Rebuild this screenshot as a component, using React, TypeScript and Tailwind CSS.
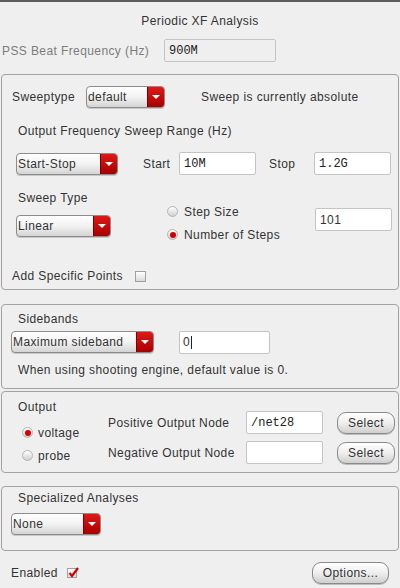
import React from "react";

const font = "font-['Liberation_Sans',Arial,sans-serif] text-[12px] tracking-[0.4px] text-[#333]";
const mono = "font-['Liberation_Mono','Courier_New',monospace] text-[12px] tracking-normal text-[#222]";

function Dropdown({ label, w }: { label: string; w: string }) {
  return (
    <div
      className={`flex h-[22px] ${w} shrink-0 overflow-hidden rounded-[4px] border border-[#8c8c8c] bg-gradient-to-b from-white via-[#f2f2f2] to-[#d4d4d4] shadow-[0_1px_0_#c8c8c8]`}
    >
      <span className="flex flex-1 items-center pl-[1px] leading-none">{label}</span>
      <span className="flex w-[17px] items-center justify-center border-l border-[#7a0000] bg-gradient-to-b from-[#e01818] to-[#a80000]">
        <span className="h-0 w-0 border-x-[4px] border-t-[4px] border-x-transparent border-t-white" />
      </span>
    </div>
  );
}

function Field({ value, w, mono: isMono, disabled }: { value: string; w: string; mono?: boolean; disabled?: boolean }) {
  return (
    <div
      className={`flex h-[23px] ${w} shrink-0 items-center rounded-[2px] border border-[#c4c4c4] pl-[4px] ${
        disabled ? "bg-[#efefef]" : "bg-white"
      } ${isMono ? mono : ""}`}
    >
      {value}
    </div>
  );
}

function Radio({ on }: { on?: boolean }) {
  return (
    <span className="flex h-[11px] w-[11px] shrink-0 items-center justify-center rounded-full border border-[#b4b4b4] bg-gradient-to-b from-white to-[#d0d0d0]">
      {on && <span className="h-[6px] w-[6px] rounded-full bg-[#d40000]" />}
    </span>
  );
}

function Button({ label, w }: { label: string; w: string }) {
  return (
    <div
      className={`flex h-[22px] ${w} shrink-0 items-center justify-center rounded-[9px] border border-[#8a8a8a] bg-gradient-to-b from-white via-[#eeeeee] to-[#cfcfcf] shadow-[0_1px_0_#bdbdbd]`}
    >
      {label}
    </div>
  );
}

function Box({ children, className }: { children: React.ReactNode; className: string }) {
  return (
    <div className={`ml-[1px] w-[398px] rounded-[4px] border border-[#a2a2a2] pl-[2px] ${className}`}>{children}</div>
  );
}

export default function App() {
  return (
    <div className={`h-[588px] w-[400px] overflow-hidden border-t-2 border-[#5c5c5c] bg-[#efefef] ${font}`}>
      <div className="flex h-[30px] items-end justify-center pb-[2px]">Periodic XF Analysis</div>

      <div className="mt-[7px] flex h-[23px] items-center">
        <span className="ml-[2px] w-[162px] text-[#7c7c7c]">PSS Beat Frequency (Hz)</span>
        <Field value="900M" w="w-[112px]" mono disabled />
      </div>

      <Box className="mt-[12px] h-[216px]">
        <div className="mt-[11px] flex h-[22px] items-center">
          <span className="ml-[8px] w-[74px]">Sweeptype</span>
          <Dropdown label="default" w="w-[79px]" />
          <span className="ml-[36px]">Sweep is currently absolute</span>
        </div>
        <div className="mt-[15px] flex h-[16px] items-center pl-[14px]">Output Frequency Sweep Range (Hz)</div>
        <div className="mt-[12px] flex h-[25px] items-center">
          <span className="ml-[12px]">
            <Dropdown label="Start-Stop" w="w-[102px]" />
          </span>
          <span className="ml-[25px] w-[36px]">Start</span>
          <Field value="10M" w="w-[77px]" mono />
          <span className="ml-[13px] w-[45px]">Stop</span>
          <Field value="1.2G" w="w-[77px]" mono />
        </div>
        <div className="mt-[13px] flex h-[57px]">
          <div className="flex w-[163px] flex-col">
            <span className="flex h-[18px] items-center pl-[14px]">Sweep Type</span>
            <span className="mt-[8px] pl-[12px]">
              <Dropdown label="Linear" w="w-[95px]" />
            </span>
          </div>
          <div className="flex w-[148px] flex-col pt-[11px]">
            <label className="flex h-[23px] items-center gap-[6px]">
              <Radio />
              Step Size
            </label>
            <label className="flex h-[23px] items-center gap-[6px]">
              <Radio on />
              Number of Steps
            </label>
          </div>
          <div className="pt-[19px]">
            <Field value="101" w="w-[77px]" />
          </div>
        </div>
        <div className="mt-[22px] flex h-[16px] items-center">
          <span className="ml-[8px] w-[123px]">Add Specific Points</span>
          <span className="h-[11px] w-[11px] border border-[#a0a0a0] bg-gradient-to-b from-white to-[#dadada]" />
        </div>
      </Box>

      <Box className="mt-[14px] h-[85px]">
        <div className="mt-[6px] flex h-[16px] items-center pl-[14px]">Sidebands</div>
        <div className="mt-[3px] flex h-[24px] items-center">
          <span className="ml-[7px]">
            <Dropdown label="Maximum sideband" w="w-[143px]" />
          </span>
          <span className="ml-[25px]">
            <div className="flex h-[23px] w-[91px] items-center rounded-[2px] border border-[#c4c4c4] bg-white pl-[3px]">
              0<span className="ml-[1px] h-[13px] w-px bg-[#222]" />
            </div>
          </span>
        </div>
        <div className="mt-[8px] flex h-[16px] items-center pl-[14px]">When using shooting engine, default value is 0.</div>
      </Box>

      <Box className="mt-[2px] h-[82px]">
        <div className="flex">
          <div className="flex w-[104px] flex-col">
            <span className="mt-[7px] flex h-[16px] items-center pl-[14px]">Output</span>
            <label className="mt-[6px] flex h-[23px] items-center gap-[5px] pl-[18px]">
              <Radio on />
              voltage
            </label>
            <label className="flex h-[23px] items-center gap-[5px] pl-[18px]">
              <Radio />
              probe
            </label>
          </div>
          <div className="flex flex-col pt-[19px]">
            <div className="flex h-[23px] items-center">
              <span className="w-[138px]">Positive Output Node</span>
              <Field value="/net28" w="w-[77px]" mono />
              <span className="ml-[14px]">
                <Button label="Select" w="w-[58px]" />
              </span>
            </div>
            <div className="mt-[7px] flex h-[23px] items-center">
              <span className="w-[138px]">Negative Output Node</span>
              <Field value="" w="w-[77px]" />
              <span className="ml-[14px]">
                <Button label="Select" w="w-[58px]" />
              </span>
            </div>
          </div>
        </div>
      </Box>

      <Box className="mt-[13px] h-[65px]">
        <div className="mt-[3px] flex h-[16px] items-center pl-[14px]">Specialized Analyses</div>
        <div className="mt-[7px] pl-[7px]">
          <Dropdown label="None" w="w-[90px]" />
        </div>
      </Box>

      <div className="mt-[10px] flex h-[24px] items-center">
        <span className="ml-[11px] w-[56px]">Enabled</span>
        <span className="relative h-[10px] w-[10px] border border-[#a0a0a0] bg-gradient-to-b from-white to-[#dadada]">
          <svg className="absolute -top-[2px] left-0" width="11" height="11" viewBox="0 0 11 11">
            <path d="M1.5 6 L4 9 L10 1" fill="none" stroke="#d40000" strokeWidth="2.2" />
          </svg>
        </span>
        <span className="ml-[235px]">
          <Button label="Options..." w="w-[77px]" />
        </span>
      </div>
    </div>
  );
}
